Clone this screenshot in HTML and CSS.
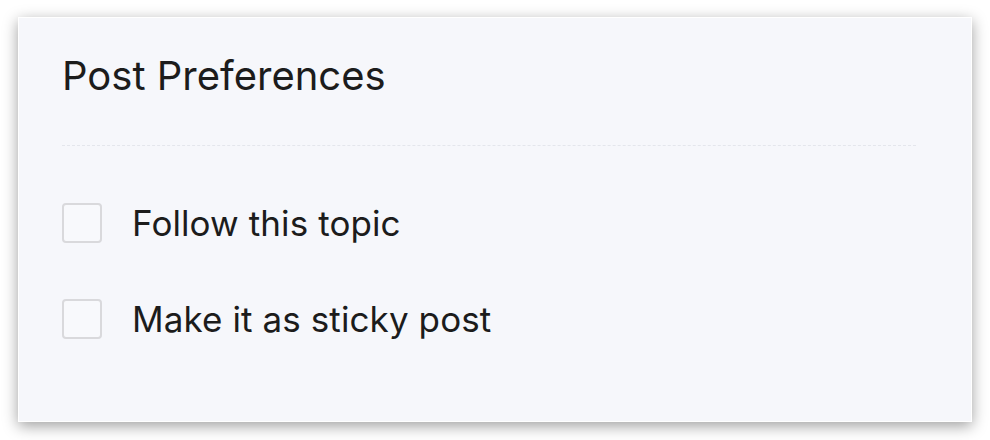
FILE: index.html
```html
<!DOCTYPE html>
<html>
<head>
<meta charset="utf-8">
<link rel="stylesheet" href="styles.css">
</head>
<body>
<div class="card">
  <h1 class="title">Post Preferences</h1>
  <div class="divider"></div>
  <ul class="options">
    <li class="option"><span class="box"></span><span class="label">Follow this topic</span></li>
    <li class="option"><span class="box"></span><span class="label">Make it as sticky post</span></li>
  </ul>
</div>
</body>
</html>
```
FILE: styles.css
```css
html, body {
  margin: 0;
  padding: 0;
  background: #ffffff;
}
body {
  width: 990px;
  height: 440px;
  padding: 17px 18px;
  box-sizing: border-box;
  font-family: Inter, "Noto Sans", sans-serif;
  color: #1c1c1c;
}
.card {
  width: 954px;
  height: 405px;
  box-sizing: border-box;
  background: #f6f7fb;
  border: 1px solid #ffffff;
  box-shadow: 0 4px 14px rgba(0, 0, 0, 0.38);
  padding: 0 55px 0 43px;
}
.title {
  margin: 0;
  padding-top: 35px;
  font-size: 40px;
  font-weight: 400;
  line-height: 46px;
  letter-spacing: 0;
}
.divider {
  margin-top: 46px;
  border-top: 1px dashed #e4e6ec;
}
.options {
  list-style: none;
  margin: 0;
  padding: 57px 0 0 0;
  display: flex;
  flex-direction: column;
  gap: 56px;
}
.option {
  display: flex;
  align-items: center;
  gap: 30px;
  height: 40px;
}
.box {
  width: 40px;
  height: 40px;
  box-sizing: border-box;
  border: 2px solid #d9d9dc;
  border-radius: 4px;
  background: #f8f9fc;
}
.label {
  font-size: 35px;
  line-height: 40px;
  letter-spacing: 0.1px;
}
```
